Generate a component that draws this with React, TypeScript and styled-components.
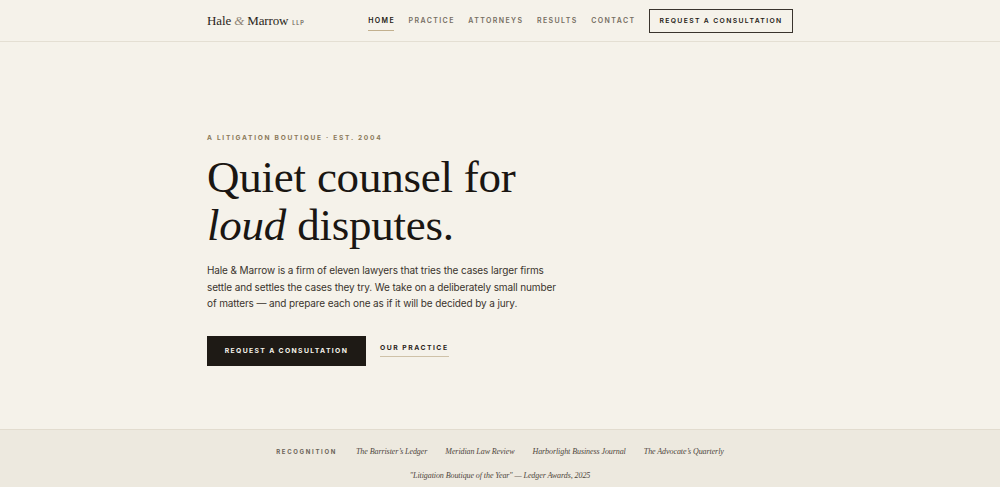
import React from "react";
import styled, { createGlobalStyle } from "styled-components";

const GlobalStyle = createGlobalStyle`
  html, body { margin: 0; padding: 0; }
  body {
    background: #f5f2ea;
    font-family: "Inter", "Liberation Sans", sans-serif;
    color: #1e1a15;
    -webkit-font-smoothing: antialiased;
  }
  * { box-sizing: border-box; }
`;

const Page = styled.div`
  width: 1000px;
  height: 487px;
  display: flex;
  flex-direction: column;
  overflow: hidden;
`;

const Container = styled.div`
  width: 586px;
  margin: 0 auto;
`;

const Header = styled.header`
  height: 42px;
  border-bottom: 1px solid #e4dfd3;
  flex-shrink: 0;
`;

const HeaderInner = styled(Container)`
  height: 100%;
  display: flex;
  align-items: center;
  justify-content: space-between;
`;

const Logo = styled.div`
  display: flex;
  align-items: baseline;
  gap: 4px;
  font-family: "Liberation Serif", serif;
  font-size: 13px;
  color: #2a2520;
  letter-spacing: -0.01em;
`;

const Amp = styled.span`
  font-style: italic;
  color: #8f8576;
`;

const LLP = styled.span`
  font-family: "Inter", sans-serif;
  font-size: 5.5px;
  font-weight: 600;
  letter-spacing: 0.15em;
  color: #6b6358;
`;

const Nav = styled.nav`
  display: flex;
  align-items: center;
`;

const NavLink = styled.a<{ $active?: boolean }>`
  position: relative;
  font-size: 7px;
  font-weight: 600;
  letter-spacing: 0.2em;
  color: ${(p) => (p.$active ? "#1e1a15" : "#766e62")};
  margin-right: 13.5px;
  padding: 6px 0;
  text-decoration: none;
  &:last-of-type {
    margin-right: 16px;
  }
  ${(p) =>
    p.$active &&
    `&::after { content: ""; position: absolute; left: 0; right: 0.2em; bottom: 0; height: 1px; background: #c2b08e; }`}
`;

const OutlineButton = styled.a`
  display: inline-flex;
  align-items: center;
  justify-content: center;
  height: 24px;
  width: 144px;
  border: 1px solid #3a342d;
  font-size: 6.8px;
  font-weight: 600;
  letter-spacing: 0.2em;
  color: #1e1a15;
`;

const Hero = styled.main`
  flex: 1;
`;

const HeroInner = styled(Container)`
  padding-top: 92px;
`;

const Eyebrow = styled.div`
  font-size: 6.6px;
  font-weight: 700;
  letter-spacing: 0.26em;
  color: #8b7a5a;
  margin-bottom: 11px;
`;

const Title = styled.h1`
  margin: 0;
  font-family: "Liberation Serif", serif;
  font-weight: 400;
  font-size: 45px;
  line-height: 48px;
  letter-spacing: -0.005em;
  color: #1a1612;
`;

const Lead = styled.p`
  margin: 13px 0 0;
  width: 355px;
  font-size: 10px;
  line-height: 16.6px;
  letter-spacing: -0.012em;
  color: #3a342d;
`;

const Actions = styled.div`
  display: flex;
  align-items: center;
  gap: 14px;
  margin-top: 24px;
`;

const SolidButton = styled.a`
  display: inline-flex;
  align-items: center;
  justify-content: center;
  height: 30px;
  width: 159px;
  background: #1e1a15;
  color: #f5f2ea;
  font-size: 6.8px;
  font-weight: 700;
  letter-spacing: 0.2em;
`;

const TextLink = styled.a`
  font-size: 6.8px;
  font-weight: 700;
  letter-spacing: 0.22em;
  color: #2a2520;
  padding-bottom: 4px;
  border-bottom: 1px solid #cfc2a8;
  margin-top: -2px;
`;

const Band = styled.footer`
  height: 58px;
  flex-shrink: 0;
  background: #ede9df;
  border-top: 1px solid #e2dccf;
  display: flex;
  flex-direction: column;
  align-items: center;
  padding-top: 17px;
  gap: 15px;
`;

const BandRow = styled.div`
  display: flex;
  align-items: center;
  gap: 18px;
`;

const BandLabel = styled.span`
  font-size: 6px;
  font-weight: 700;
  letter-spacing: 0.28em;
  color: #6b6358;
  margin-right: 1px;
`;

const Pub = styled.span`
  font-family: "Liberation Serif", serif;
  font-style: italic;
  font-size: 8px;
  letter-spacing: -0.01em;
  color: #4d463d;
`;

const Quote = styled.div`
  font-family: "Liberation Serif", serif;
  font-style: italic;
  font-size: 8px;
  letter-spacing: -0.01em;
  color: #4d463d;
`;

const navItems = ["HOME", "PRACTICE", "ATTORNEYS", "RESULTS", "CONTACT"];
const pubs = [
  "The Barrister’s Ledger",
  "Meridian Law Review",
  "Harborlight Business Journal",
  "The Advocate’s Quarterly",
];

export default function App() {
  return (
    <Page>
      <GlobalStyle />
      <Header>
        <HeaderInner>
          <Logo>
            <span>
              Hale <Amp>&amp;</Amp> Marrow
            </span>
            <LLP>LLP</LLP>
          </Logo>
          <Nav>
            {navItems.map((n, i) => (
              <NavLink key={n} $active={i === 0}>
                {n}
              </NavLink>
            ))}
            <OutlineButton>REQUEST A CONSULTATION</OutlineButton>
          </Nav>
        </HeaderInner>
      </Header>
      <Hero>
        <HeroInner>
          <Eyebrow>A LITIGATION BOUTIQUE · EST. 2004</Eyebrow>
          <Title>
            Quiet counsel for
            <br />
            <em>loud</em> disputes.
          </Title>
          <Lead>
            Hale &amp; Marrow is a firm of eleven lawyers that tries the cases larger firms
            settle and settles the cases they try. We take on a deliberately small number of
            matters — and prepare each one as if it will be decided by a jury.
          </Lead>
          <Actions>
            <SolidButton>REQUEST A CONSULTATION</SolidButton>
            <TextLink>OUR PRACTICE</TextLink>
          </Actions>
        </HeroInner>
      </Hero>
      <Band>
        <BandRow>
          <BandLabel>RECOGNITION</BandLabel>
          {pubs.map((p) => (
            <Pub key={p}>{p}</Pub>
          ))}
        </BandRow>
        <Quote>"Litigation Boutique of the Year" — Ledger Awards, 2025</Quote>
      </Band>
    </Page>
  );
}
